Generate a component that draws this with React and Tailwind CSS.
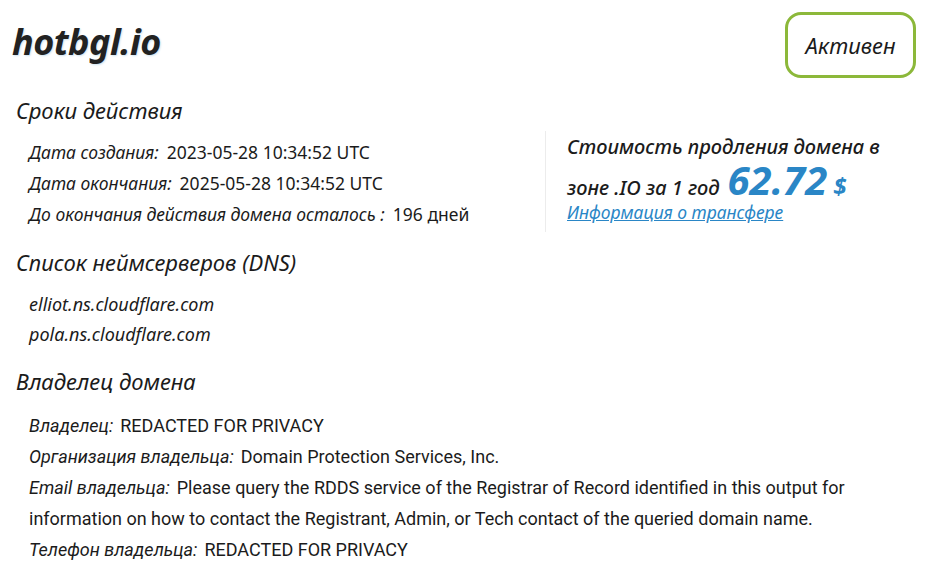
import React from 'react';

const dates = [
  { label: 'Дата создания:', value: '2023-05-28 10:34:52 UTC' },
  { label: 'Дата окончания:', value: '2025-05-28 10:34:52 UTC' },
  { label: 'До окончания действия домена осталось :', value: '196 дней' },
];

const nameservers = ['elliot.ns.cloudflare.com', 'pola.ns.cloudflare.com'];

const font = { fontFamily: '"Noto Sans", "Open Sans", sans-serif' };

const App = () => {
  return (
    <div className="w-[940px] h-[574px] overflow-hidden bg-white text-[#1b1b1b]" style={font}>
      {/* Header */}
      <div className="flex items-start justify-between pl-[12px] pr-[24px] pt-[12px]">
        <h1 className="mt-[10px] text-[36px] leading-[40px] font-bold italic tracking-[-0.5px] text-[#222] [text-shadow:1px_1px_2px_#cfe3f0]">
          hotbgl.io
        </h1>
        <div className="flex h-[66px] w-[131px] items-center justify-center rounded-[16px] border-[3px] border-[#8cb83a] text-[22px] italic">
          Активен
        </div>
      </div>

      {/* Dates + price */}
      <h2 className="mt-[18px] pl-[16px] text-[22px] leading-[28px] italic">Сроки действия</h2>
      <div className="mt-[13px] flex">
        <div className="w-[545px] pl-[29px]">
          {dates.map((d) => (
            <div key={d.label} className="h-[31px] text-[17.5px] leading-[31px]">
              <span className="italic">{d.label}</span>
              <span className="ml-[8px]">{d.value}</span>
            </div>
          ))}
        </div>
        <div className="-mt-[6px] h-[101px] border-l border-[#ececec] pl-[21px]">
          <div className="h-[32px] text-[20px] italic leading-[32px] font-medium">Стоимость продления домена в</div>
          <div className="flex h-[34px] items-baseline text-[20px] italic font-medium leading-[34px]">
            <span>зоне .IO за 1 год</span>
            <span className="ml-[8px] text-[40px] font-bold text-[#2a86c6]">62.72</span>
            <span className="ml-[6px] text-[24px] font-bold text-[#2a86c6]">$</span>
          </div>
          <a href="#" className="block h-[30px] text-[17.5px] italic text-[#2a86c6] underline leading-[30px]">
            Информация о трансфере
          </a>
        </div>
      </div>

      {/* DNS */}
      <h2 className="mt-[16px] pl-[16px] text-[22px] leading-[28px] italic">Список неймсерверов (DNS)</h2>
      <div className="mt-[13px] pl-[29px]">
        {nameservers.map((ns) => (
          <div key={ns} className="h-[30px] text-[18px] italic leading-[30px]">{ns}</div>
        ))}
      </div>

      {/* Owner */}
      <h2 className="mt-[18px] pl-[16px] text-[22px] leading-[28px] italic">Владелец домена</h2>
      <div className="mt-[15px] pl-[29px] text-[18px] leading-[31px]" style={{ fontFamily: 'Roboto, "Liberation Sans", sans-serif' }}>
        <div><span className="italic">Владелец:</span><span className="ml-[7px]">REDACTED FOR PRIVACY</span></div>
        <div><span className="italic">Организация владельца:</span><span className="ml-[7px]">Domain Protection Services, Inc.</span></div>
        <div className="w-[840px]">
          <span className="italic">Email владельца:</span>
          <span className="ml-[7px]">Please query the RDDS service of the Registrar of Record identified in this output for information on how to contact the Registrant, Admin, or Tech contact of the queried domain name.</span>
        </div>
        <div><span className="italic">Телефон владельца:</span><span className="ml-[7px]">REDACTED FOR PRIVACY</span></div>
      </div>
    </div>
  );
};

export default App;
